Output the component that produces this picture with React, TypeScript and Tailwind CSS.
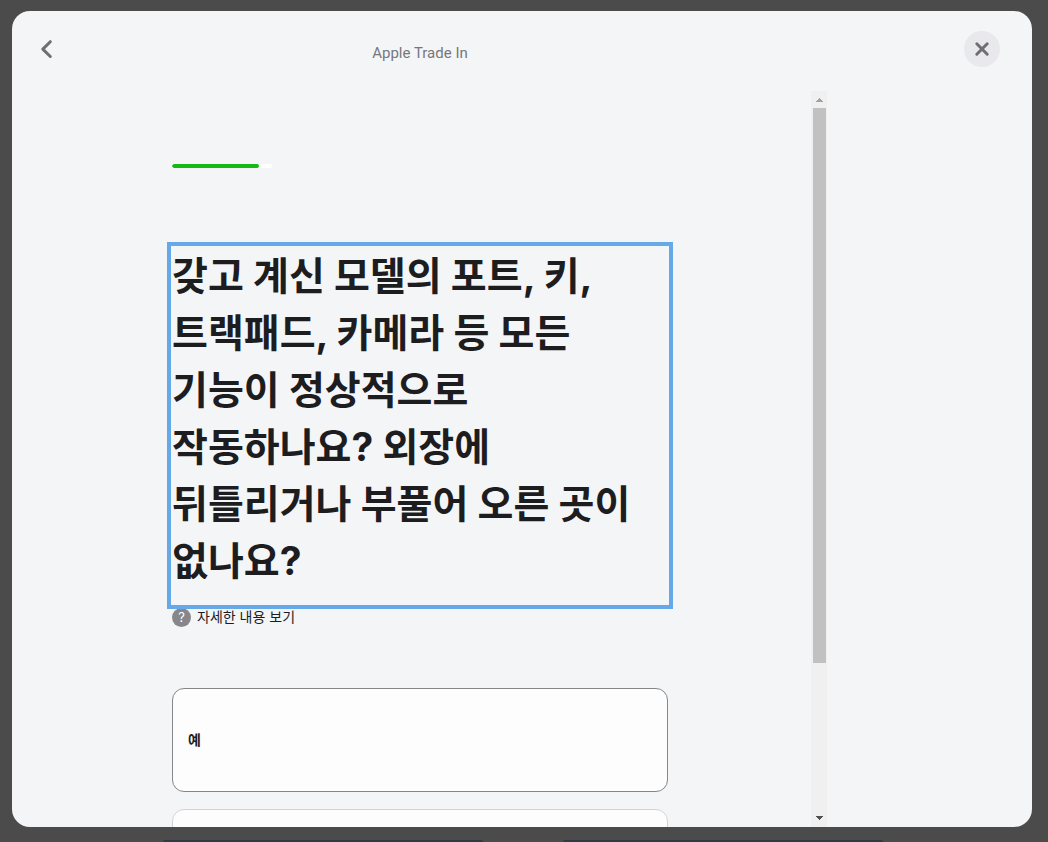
import React from "react";

const options = [
  { value: "yes", name: "예", text: "예" },
  { value: "no", name: "아니요", text: "" },
];

function Header() {
  return (
    <header className="flex h-20 shrink-0 items-start justify-between">
      <div className="flex w-4/5 items-start">
        <button
          type="button"
          aria-label="뒤로"
          className="mt-6 ml-6 flex h-7 w-7 shrink-0 items-center justify-center text-[#6e6e73]"
        >
          <svg width="28" height="28" viewBox="0 0 28 28" fill="none" stroke="currentColor" strokeWidth="3" strokeLinecap="round" strokeLinejoin="round" className="shrink-0">
            <path d="M14.3 6.7 6.8 14.1l7.5 7.4" />
          </svg>
        </button>
        <h2 className="mt-8 mr-13 grow text-center text-[15px] leading-5 text-[#77777b]">Apple Trade In</h2>
      </div>
      <button
        type="button"
        aria-label="닫기"
        className="mt-5 mr-8 flex h-9 w-9 shrink-0 items-center justify-center rounded-full bg-[#e8e8ed] text-[#6e6e73]"
      >
        <svg width="16" height="16" viewBox="0 0 16 16" fill="none" stroke="currentColor" strokeWidth="3" strokeLinecap="round">
          <path d="m2.8 2.8 10.4 10.4M13.2 2.8 2.8 13.2" />
        </svg>
      </button>
    </header>
  );
}

function ScrollTrack() {
  return (
    <div aria-hidden="true" className="flex w-4 shrink-0 flex-col items-center justify-between bg-[#f0f0f0]">
      <svg width="16" height="17" viewBox="0 0 16 17" shapeRendering="crispEdges">
        <path d="M4 11h8L8 7z" fill="#a3a3a3" />
      </svg>
      <div className="w-[13px] grow">
        <div className="h-[79%] bg-[#c1c1c1]" />
      </div>
      <svg width="16" height="17" viewBox="0 0 16 17" shapeRendering="crispEdges">
        <path d="M4 6h8l-4 4z" fill="#505050" />
      </svg>
    </div>
  );
}

export default function App() {
  return (
    <div className="flex h-screen flex-col overflow-hidden bg-[#4b4b4b] pt-[11px] text-[#1d1d1f]">
      <div role="dialog" aria-label="Apple Trade In" className="mr-4 ml-3 flex min-h-0 grow flex-col overflow-hidden rounded-[18px] bg-[#f4f5f7] font-[Roboto,'Noto_Sans_CJK_KR',sans-serif]">
        <Header />
        <div className="flex min-h-0 w-4/5 grow pr-px">
          <main className="min-w-0 grow overflow-hidden pt-[73px] pr-[143px] pl-40">
            <div role="progressbar" aria-label="진행률" aria-valuenow={87} aria-valuemin={0} aria-valuemax={100} className="h-1 w-[100px] overflow-hidden rounded-full bg-white">
              <div className="h-full w-[87%] rounded-full bg-[#14b914]" />
            </div>
            <h1 className="mt-[79px] pb-[15px] font-[Inter,'Noto_Sans_CJK_KR',sans-serif] text-[39px] leading-[57px] font-bold break-keep outline-4 outline-offset-1 outline-[#66a9e9]">
              갖고 계신 모델의 포트, 키, 트랙패드, 카메라 등 모든 기능이 정상적으로 작동하나요? 외장에 뒤틀리거나 부풀어 오른 곳이 없나요?
            </h1>
            <button type="button" className="mt-[3px] flex items-center gap-1.5 font-[Inter,'Noto_Sans_CJK_KR',sans-serif] text-[14px] leading-5">
              <span aria-hidden="true" className="flex h-[19px] w-[19px] items-center justify-center rounded-full bg-[#86868b] text-[13px] text-white">?</span>
              자세한 내용 보기
            </button>
            <fieldset aria-label="기기 상태" className="mt-[61px] flex flex-col gap-[17px]">
              {options.map((option) => (
                <label
                  key={option.value}
                  className="relative flex h-[104px] shrink-0 cursor-pointer items-center rounded-xl border border-[#d2d2d7] bg-[#fdfdfd] px-[15px] font-[Inter,'Noto_Sans_CJK_KR',sans-serif] text-[14px] leading-5 font-bold has-checked:border-[#86868b]"
                >
                  <input type="radio" name="condition" value={option.value} aria-label={option.name} defaultChecked={option.value === "yes"} className="sr-only" />
                  {option.text}
                </label>
              ))}
            </fieldset>
          </main>
          <ScrollTrack />
        </div>
      </div>
      <div aria-hidden="true" className="flex h-[15px] shrink-0 items-end gap-20 pl-[163px]">
        <div className="h-0.5 w-80 rounded-t bg-[#2f3a48]" />
        <div className="h-0.5 w-80 rounded-t bg-[#2f3a48]" />
      </div>
    </div>
  );
}
